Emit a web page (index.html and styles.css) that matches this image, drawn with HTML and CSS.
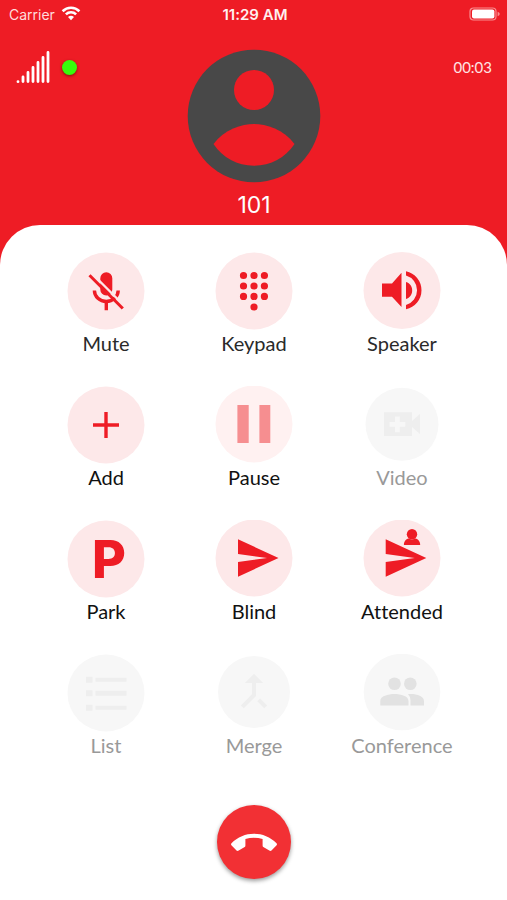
FILE: index.html
```html
<!DOCTYPE html>
<html lang="en">
<head>
<meta charset="utf-8">
<meta name="viewport" content="width=device-width, initial-scale=1">
<title>Call with 101</title>
<link rel="stylesheet" href="styles.css">
</head>
<body>
<div class="status">
  <div class="carrier">
    <span>Carrier</span>
    <svg width="20" height="16" viewBox="0 0 20 16" fill="none" stroke="#fff" stroke-width="2.6" aria-hidden="true">
      <path d="M1.6 5.2A12 12 0 0 1 18.4 5.2M4.9 8.4A7.3 7.3 0 0 1 15.1 8.4"/>
      <path d="M10 14.2L7 11.1A4.3 4.3 0 0 1 13 11.1Z" fill="#fff" stroke="none"/>
    </svg>
  </div>
  <time class="clock">11:29 AM</time>
  <svg class="battery" width="32" height="14" viewBox="0 0 32 14" aria-hidden="true">
    <rect x="1" y="1" width="26" height="12" rx="3.5" fill="none" stroke="#f98d90" stroke-width="1.2"/>
    <rect x="3" y="2.6" width="22.4" height="9" rx="2" fill="#fff"/>
    <path d="M28.6 4.8C31.4 5.6 31.4 8.4 28.6 9.2Z" fill="#f98d90"/>
  </svg>
</div>
<header class="caller">
  <div class="quality">
    <svg width="34" height="34" viewBox="0 0 34 34" stroke="#fff" stroke-width="2.8" stroke-linecap="round" aria-hidden="true">
      <path d="M2 31.6v.1M7 27v4.6M12 22.4v9.2M17 17.4v14.2M22 12.4v19.2M27 7.4v24.2M32 2.4v29.2"/>
    </svg>
    <span class="online"></span>
  </div>
  <svg class="avatar" width="134" height="134" viewBox="-67 -67 134 134" aria-hidden="true">
    <circle r="66.3" fill="#484848"/>
    <circle cy="-26" r="20" fill="#ee1c25"/>
    <path d="M-40.5 28C-30 13.500-12 8 0 8S30 13.500 40.500 28C31 42 17 49.700 0 49.700S-31 42-40.500 28Z" fill="#ee1c25"/>
  </svg>
  <span class="timer">00:03</span>
  <h1 class="name">101</h1>
</header>
<main class="sheet">
  <div class="actions">
    <button class="action">
      <svg class="icon" viewBox="-39 -39 78 78"><circle class="disc" r="38.500"/>
        <path d="M-5.700-12.700A6 6 0 0 1 6.300-12.700V-1.500A6 6 0 0 1-5.700-1.500ZM-1.400 10H2V19.300H-1.400Z"/>
        <path fill="none" stroke="#ee1c25" stroke-width="3.400" d="M-11.600-.5A11.900 11 0 0 0 12.200-.5"/>
        <path fill="none" stroke="#fde8e9" stroke-width="2.400" d="M-13.500-17L18 14.500"/>
        <path fill="none" stroke="#ee1c25" stroke-width="3" d="M-16.500-15.700L16.800 17.500"/></svg>
      <span>Mute</span>
    </button>
    <button class="action">
      <svg class="icon" viewBox="-39 -39 78 78"><circle class="disc" r="38.500"/>
        <path fill="none" stroke="#ee1c25" stroke-width="7.200" stroke-linecap="round" d="M-10.500-15.500h.01M0-15.500h.01M10.400-15.500h.01M-10.500-5h.01M0-5h.01M10.400-5h.01M-10.500 5.400h.01M0 5.400h.01M10.400 5.400h.01M0 16h.01"/></svg>
      <span>Keypad</span>
    </button>
    <button class="action">
      <svg class="icon" viewBox="-39 -39 78 78"><circle class="disc" cy="-.5" r="38.500"/>
        <path d="M-20-7.500H-10L-.5-18.300V16L-10 5.700H-20ZM4-9C12.300-7 12.300 6 4 8ZM4-19.700A19.400 19.400 0 0 1 4 18.300V14A15.300 15.300 0 0 0 4-15.400Z"/></svg>
      <span>Speaker</span>
    </button>
    <button class="action dark">
      <svg class="icon" viewBox="-39 -39 78 78"><circle class="disc" r="38.500"/>
        <path d="M-13-1.700H-1.700V-13H1.700V-1.700H13V1.700H1.700V13H-1.700V1.700H-13Z"/></svg>
      <span>Add</span>
    </button>
    <button class="action dark held">
      <svg class="icon" viewBox="-39 -39 78 78"><circle class="disc" cy="-1" r="38.500"/>
        <path d="M-16.600-20H-5.300V18H-16.600ZM5.400-20H16.300V18H5.400Z"/></svg>
      <span>Pause</span>
    </button>
    <button class="action off" disabled>
      <svg class="icon" viewBox="-39 -39 78 78"><circle class="disc" cy="-.8" r="36.500"/>
        <path fill-rule="evenodd" d="M-18-12.700H10V-4L18-11V9L10 2V11H-18ZM-7-8.500V-3H-12.500V1.800H-7V7.300H-2.200V1.800H3.300V-3H-2.200V-8.500Z"/></svg>
      <span>Video</span>
    </button>
    <button class="action dark">
      <svg class="icon" viewBox="-39 -39 78 78"><circle class="disc" r="38.500"/>
        <text class="parking" x="-14" y="19">P</text></svg>
      <span>Park</span>
    </button>
    <button class="action dark">
      <svg class="icon" viewBox="-39 -39 78 78"><circle class="disc" cy="-1" r="38.500"/>
        <path d="M-16-19.700L24.500-1L-16 17.700V3L13-1L-16-5Z"/></svg>
      <span>Blind</span>
    </button>
    <button class="action dark">
      <svg class="icon" viewBox="-39 -39 78 78"><circle class="disc" cy="-1" r="38.500"/>
        <path d="M-16.300-19.700L24.300-1L-16.300 17.700V3L12.700-1L-16.300-5Z"/>
        <circle cx="10" cy="-24.700" r="5.200"/>
        <path d="M1.900-14C1.900-18 4.500-20.500 7-20.500Q10-18.500 13-20.500C15.500-20.500 18.200-18 18.200-14Z"/></svg>
      <span>Attended</span>
    </button>
    <button class="action off" disabled>
      <svg class="icon" viewBox="-39 -39 78 78"><circle class="disc" r="38.500"/>
        <path d="M-20-16.300h6.500v6h-6.500ZM-10.500-15.300h31v4h-31ZM-20-2.700h6.500v6h-6.500ZM-10.500-2.200h31v5h-31ZM-20 11.700h6.500v6h-6.500ZM-10.500 12.700h31v4h-31Z"/></svg>
      <span>List</span>
    </button>
    <button class="action off" disabled>
      <svg class="icon" viewBox="-39 -39 78 78"><circle class="disc" cy="-1" r="36"/>
        <path transform="translate(-24.600 -26.500) scale(2.050)" d="M17 20.410L18.410 19 15 15.590 13.590 17 17 20.410zM7.500 8H11v5.590L5.590 19 7 20.410l6-6V8h3.500L12 3.500 7.500 8z"/></svg>
      <span>Merge</span>
    </button>
    <button class="action off people" disabled>
      <svg class="icon" viewBox="-39 -39 78 78"><circle class="disc" cy="-1" r="38.300"/>
        <circle cx="-7.500" cy="-9.300" r="6.300"/><circle cx="8.300" cy="-9.300" r="6.300"/>
        <path d="M-21.700 12.500V8C-21.700 3-14 1-7.500 1S6.500 3 6.500 8V12.500ZM8.500 12.500V7.500Q8.500 3.500 6 1.300C13 .4 22 3 22 8V12.500Z"/></svg>
      <span>Conference</span>
    </button>
  </div>
  <button class="hangup" aria-label="End call">
    <svg width="48" height="24" viewBox="-24 -12 48 24" fill="#fff" aria-hidden="true">
      <path d="M-22.500 1.300C-10.500-11.500 10.500-11.500 22.500 1.300Q23.400 2.300 22.600 3.300L17.500 8.500Q16.500 9.300 15.300 8.500L9.300 5Q8.600 4.500 8.600 3.500V-3Q0-5.300-8.600-3V3.500Q-8.600 4.500-9.300 5L-15.300 8.500Q-16.500 9.300-17.500 8.500L-22.600 3.300Q-23.400 2.300-22.500 1.300Z"/>
    </svg>
  </button>
</main>
</body>
</html>
```
FILE: styles.css
```css
* {
  box-sizing: border-box;
}

body {
  margin: 0;
  min-height: 100vh;
  display: flex;
  flex-direction: column;
  background: #ee1c25;
  color: #fff;
  font-family: Lato, "Open Sans", sans-serif;
  font-variant-ligatures: none;
}

.status {
  display: grid;
  grid-template-columns: 1fr auto 1fr;
  align-items: center;
  height: 28px;
  padding: 0 6px 0 9px;
  font-family: Inter, sans-serif;
  font-size: 14px;
}

.carrier {
  display: flex;
  align-items: center;
  gap: 6px;
  color: #ffdcdd;
}

.clock {
  font-size: 15px;
  font-weight: 600;
  color: #fff0f0;
}

.battery {
  justify-self: end;
}

.caller {
  display: grid;
  grid-template-columns: 1fr auto 1fr;
  padding: 21px 15px 4px 16px;
}

.quality {
  display: flex;
  align-items: center;
  align-self: start;
  gap: 12px;
  padding-top: 1px;
}

.online {
  width: 15px;
  height: 15px;
  border-radius: 50%;
  background: #38fb0c;
  box-shadow: 0 1px 3px rgba(60, 0, 0, 0.6);
}

.timer {
  justify-self: end;
  padding-top: 8px;
  font-size: 15px;
  line-height: 20px;
  color: #ffe4e4;
}

.name {
  grid-column: 1 / -1;
  margin: 6px 0 0;
  text-align: center;
  font-family: Inter, sans-serif;
  font-size: 23px;
  font-weight: 400;
  line-height: 32px;
}

.sheet {
  flex: 1;
  padding: 27px 31px 21px 32px;
  border-radius: 40px 40px 0 0;
  background: #fff;
  text-align: center;
}

.actions {
  display: grid;
  grid-template-columns: repeat(3, 1fr);
  row-gap: 30px;
}

button {
  border: 0;
  padding: 0;
  background: none;
  font: inherit;
  cursor: pointer;
}

.action {
  display: flex;
  flex-direction: column;
  align-items: center;
  font-size: 20px;
  line-height: 26px;
  color: #2a2a2a;
  fill: #ee1c25;
}

.icon {
  width: 78px;
  height: 78px;
}

.disc {
  fill: #fde8e9;
}

.dark {
  color: #111;
}

.held {
  fill: #f68e90;
}

.held .disc {
  fill: #fff1f1;
}

.off {
  color: #999;
  fill: #eee;
  cursor: default;
}

.off .disc {
  fill: #f7f7f7;
}

.people {
  fill: #e2e2e2;
}

.parking {
  font-family: Inter, sans-serif;
  font-size: 52px;
  font-weight: 800;
}

.hangup {
  display: inline-flex;
  align-items: center;
  justify-content: center;
  width: 74px;
  height: 74px;
  margin-top: 47px;
  border-radius: 50%;
  background: #f23034;
  box-shadow: 0 2px 4px rgba(0, 0, 0, 0.4);
}
```
